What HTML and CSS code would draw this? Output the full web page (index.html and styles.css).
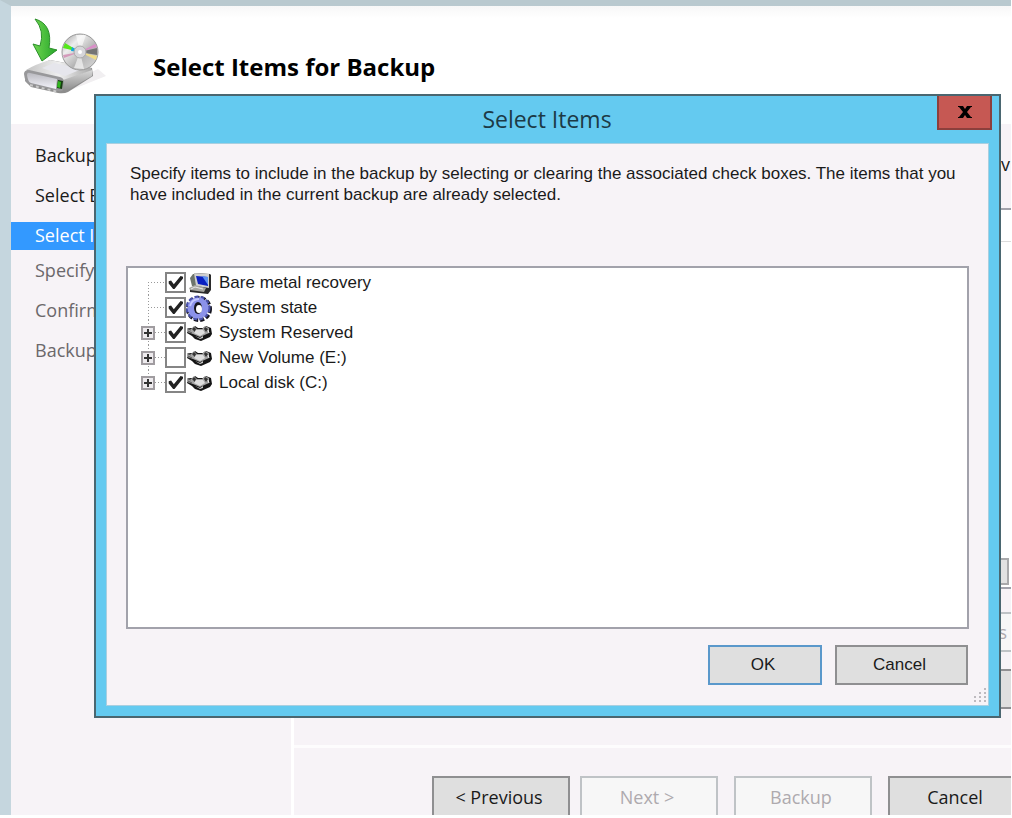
FILE: index.html
```html
<!DOCTYPE html>
<html lang="en">
<head>
  <meta charset="UTF-8">
  <title>Select Items for Backup</title>
  <link rel="stylesheet" href="styles.css">
</head>
<body>
  <!-- shared icons -->
  <svg class="sprites" aria-hidden="true">
    <symbol id="icon-disk" viewBox="0 0 26 24">
      <path d="M2 7 L7 7 L9 5 L12 7 L17 7 L20 5 L25 7 L26 13 L24 16 L15 20 L9 18 L6 15 L1 12Z" fill="#151515"/>
      <path d="M1 7 L5 8 L8 5 L11 8 L16 8 L19 5 L23 7 L23 12 L14 16 L7 13 L1 11Z" fill="#a2a2a2"/>
      <path d="M6 8 L8 6 L10 8 L9 11Z M18 8 L19 6 L22 8 L20 11Z" fill="#333"/>
      <path d="M10 9 L17 9 L19 12 L14 15 L8 12Z" fill="#dedede"/>
      <path d="M9 15 L14 17 L17 15 L17 17 L14 18Z" fill="#ccc"/>
      <path d="M2 8 L5 9 M2 10 L6 12" stroke="#555" stroke-width="1"/>
      <path d="M22 9 L23 12" stroke="#eee" stroke-width="1"/>
    </symbol>
  </svg>

  <div class="wizard">
    <header class="wizard-header">
      <svg class="wizard-logo" viewBox="0 0 86 84" aria-hidden="true">
        <defs>
          <linearGradient id="arrow" x1="0" y1="0" x2="1" y2="0">
            <stop offset="0" stop-color="#6fd650"/>
            <stop offset="1" stop-color="#25a52a"/>
          </linearGradient>
          <linearGradient id="front" x1="0" y1="0" x2="0" y2="1">
            <stop offset="0" stop-color="#b9b9bf"/>
            <stop offset="1" stop-color="#f4f4fb"/>
          </linearGradient>
          <linearGradient id="top" x1="0" y1="0" x2="1" y2="0">
            <stop offset="0" stop-color="#c4c4c4"/>
            <stop offset=".5" stop-color="#efefef"/>
            <stop offset="1" stop-color="#a9a9a9"/>
          </linearGradient>
          <linearGradient id="side" x1="0" y1="0" x2="0" y2="1">
            <stop offset="0" stop-color="#d8d8d8"/>
            <stop offset="1" stop-color="#8a8a8a"/>
          </linearGradient>
          <linearGradient id="disc" x1="0" y1="0" x2="1" y2="1">
            <stop offset="0" stop-color="#999"/>
            <stop offset=".3" stop-color="#eee"/>
            <stop offset=".6" stop-color="#b5b5b5"/>
            <stop offset="1" stop-color="#ddd"/>
          </linearGradient>
        </defs>
        <path d="M46 78 L86 62 L78 55 L50 68Z" fill="#f1eff1"/>
        <path d="M7 56 L30 46 L72 54 L73 62 L48 78 Q44 80 38 79 L11 73 L5 67Z" fill="#8d8d8d"/>
        <path d="M6 56 Q16 50 30 46 L71 54 Q73 56 70 57 L43 67Z" fill="url(#top)"/>
        <path d="M22 54 L34 49 L62 55 L45 62Z" fill="#e6e6ec"/>
        <path d="M43 66 L72 56 L72 62 L48 76 Q45 78 43 77Z" fill="url(#side)"/>
        <path d="M4 60 Q4 56 9 56 L40 63 Q44 64 44 68 L43 76 Q42 78 38 77 L9 70 Q5 69 4 60Z" fill="#98989a"/>
        <path d="M7 61 Q7 58 10 59 L37 65 L36 75 L11 69 Q8 68 7 61Z" fill="url(#front)"/>
        <path d="M10 71 L38 78" stroke="#c9c9c9" stroke-width="2" stroke-dasharray="3 3"/>
        <path d="M38 66 L43 67 L42 75 L37 74Z" fill="#173d12"/>
        <path d="M38 67 L41 68 L40 74 L37 73Z" fill="#30b51e"/>
        <circle cx="60" cy="38" r="18" fill="url(#disc)" stroke="#999" stroke-width="1"/>
        <path d="M60 38 L45 29 L43 34Z" fill="#56e81c"/>
        <path d="M60 38 L52 33 L51 37Z" fill="#12a7dd"/>
        <path d="M60 38 L77 34 L77 41Z" fill="#757575"/>
        <path d="M60 38 L75 30 L77 33Z" fill="#d98fc8"/>
        <path d="M60 38 L43 41 L44 44Z" fill="#d49abb"/>
        <path d="M60 38 L77 42 L76 46Z" fill="#f0dd88"/>
        <path d="M60 38 L56 21 L66 21Z M60 38 L54 54 L64 55Z" fill="#fff" opacity=".6"/>
        <circle cx="60" cy="38" r="6" fill="#d6d6da" stroke="#aaa"/>
        <circle cx="60" cy="38" r="2" fill="#fff"/>
        <path d="M15 5 Q33 10 29 34 L37 36 L22 47 L13 30 L20 32 Q25 17 15 5Z" fill="url(#arrow)" stroke="#2c8f2a" stroke-width="1"/>
      </svg>
      <h1>Select Items for Backup</h1>
    </header>

    <div class="wizard-body">
      <nav class="steps">
        <ul>
          <li class="done"><span>Backup Options</span></li>
          <li class="done"><span>Select Backup Configuration</span></li>
          <li class="current"><span>Select Items for Backup</span></li>
          <li><span>Specify Destination Type</span></li>
          <li><span>Confirmation</span></li>
          <li><span>Backup Progress</span></li>
        </ul>
      </nav>

      <main class="page">
        <section class="page-content">
          <p class="page-text">v</p>
          <div class="item-list">
            <div class="item-list-head"></div>
            <div class="item-list-rows"></div>
            <div class="scroll-thumb"></div>
          </div>
          <button class="btn page-btn settings" disabled>s</button>
          <button class="btn page-btn" aria-label="Add"></button>
        </section>
        <footer class="wizard-footer">
          <button class="btn previous">&lt; Previous</button>
          <button class="btn" disabled>Next &gt;</button>
          <button class="btn" disabled>Backup</button>
          <button class="btn">Cancel</button>
        </footer>
      </main>
    </div>
  </div>

  <div class="dialog" role="dialog" aria-labelledby="dialog-title">
    <div class="dialog-title">
      <h2 id="dialog-title">Select Items</h2>
      <button class="btn-close" aria-label="Close">
        <svg viewBox="0 0 16 14" aria-hidden="true">
          <path d="M1 1 H6 L8 4 L10 1 H15 V2 H14 L10 7 L14 12 H15 V13 H10 L8 10 L6 13 H1 V12 H2 L6 7 L2 2 H1Z" fill="#000"/>
        </svg>
      </button>
    </div>
    <div class="dialog-body">
      <p class="dialog-text">Specify items to include in the backup by selecting or clearing the associated check boxes. The items that you have included in the current backup are already selected.</p>

      <ul class="tree">
        <li>
          <span class="node first"></span>
          <span class="branch"></span>
          <input type="checkbox" id="bare-metal" checked>
          <svg class="icon" viewBox="0 0 26 24" aria-hidden="true">
            <path d="M8 2 L24 3 L25 4 L25 19 L22 23 L4 21 L4 18 L9 16Z" fill="#2b2b2b"/>
            <path d="M4 7 L7 3 L9 3 L11 16 L6 15Z" fill="#6d756b"/>
            <path d="M8 2 L23 3 L23 17 L10 15Z" fill="#cfcfcf"/>
            <path d="M10 5 L22 6 L22 15 L12 13Z" fill="#0a1fc0"/>
            <path d="M16 5 L22 6 L22 14Z" fill="#5b8ff0"/>
            <path d="M3 17 L9 14 L20 17 L18 21 L4 19Z" fill="#a6a6a0"/>
            <path d="M5 18 L9 16 L17 18" fill="none" stroke="#e9e9e9" stroke-width="1"/>
          </svg>
          <label for="bare-metal">Bare metal recovery</label>
        </li>
        <li>
          <span class="node"></span>
          <span class="branch"></span>
          <input type="checkbox" id="system-state" checked>
          <svg class="icon gear" viewBox="0 0 26 28" aria-hidden="true">
            <circle cx="13" cy="15" r="11" fill="none" stroke="#15151f" stroke-width="4" stroke-dasharray="4 2"/>
            <circle cx="12" cy="14" r="11" fill="none" stroke="#4a52a8" stroke-width="3" stroke-dasharray="4 2"/>
            <circle cx="12" cy="14" r="7" fill="#fff" stroke="#8b92ea" stroke-width="7"/>
            <path d="M4 12 Q6 5 13 5" fill="none" stroke="#c3c8ff" stroke-width="2"/>
            <ellipse cx="12" cy="14" rx="4" ry="6" fill="#15151f"/>
            <ellipse cx="13" cy="15" rx="3" ry="4" fill="#fff"/>
          </svg>
          <label for="system-state">System state</label>
        </li>
        <li>
          <span class="node"><button class="expand" aria-label="Expand System Reserved"></button></span>
          <span class="branch"></span>
          <input type="checkbox" id="system-reserved" checked>
          <svg class="icon" aria-hidden="true"><use href="#icon-disk"/></svg>
          <label for="system-reserved">System Reserved</label>
        </li>
        <li>
          <span class="node"><button class="expand" aria-label="Expand New Volume"></button></span>
          <span class="branch"></span>
          <input type="checkbox" id="new-volume">
          <svg class="icon" aria-hidden="true"><use href="#icon-disk"/></svg>
          <label for="new-volume">New Volume (E:)</label>
        </li>
        <li>
          <span class="node last"><button class="expand" aria-label="Expand Local disk"></button></span>
          <span class="branch"></span>
          <input type="checkbox" id="local-disk" checked>
          <svg class="icon" aria-hidden="true"><use href="#icon-disk"/></svg>
          <label for="local-disk">Local disk (C:)</label>
        </li>
      </ul>

      <div class="dialog-actions">
        <button class="btn btn-ok">OK</button>
        <button class="btn btn-cancel">Cancel</button>
      </div>
      <svg class="grip" viewBox="0 0 12 14" aria-hidden="true">
        <path d="M10 0h2v2h-2z M10 4h2v2h-2z M10 8h2v2h-2z M10 12h2v2h-2z M5 4h2v2h-2z M5 8h2v2h-2z M5 12h2v2h-2z M0 8h2v2h-2z M0 12h2v2h-2z" fill="#bdbabf"/>
      </svg>
    </div>
  </div>
</body>
</html>
```
FILE: styles.css
```css
* {
  box-sizing: border-box;
}

body {
  margin: 0;
  padding: 0 1px 3px 0;
  height: 100vh;
  overflow: hidden;
  background: #fff;
  font-family: "Open Sans", "Noto Sans", sans-serif;
  font-size: 18px;
  color: #1a1a1a;
}

h1, h2, p, ul {
  margin: 0;
  padding: 0;
}

ul {
  list-style: none;
}

.sprites {
  display: none;
}

.btn {
  height: 40px;
  padding: 0 4px 0 0;
  border: 2px solid #8f8f91;
  background: #dfdfdf;
  color: #1a1a1a;
  font: inherit;
}

.btn:disabled {
  border-color: #bfc3c6;
  background: #f7f7f7;
  color: #aeaaae;
}

/* Wizard window */
.wizard {
  display: flex;
  flex-direction: column;
  height: 100%;
  overflow: hidden;
  border-top: 6px solid #b9c9cf;
  border-left: 11px solid #c5d6de;
}

.wizard-header {
  display: flex;
  flex: none;
  align-items: flex-start;
  height: 118px;
  padding: 8px 9px;
  background: linear-gradient(#f7f7f7, #fff 12px);
}

.wizard-logo {
  width: 86px;
  height: 84px;
}

.wizard-header h1 {
  margin: 37px 0 0 47px;
  font-size: 24px;
  line-height: 32px;
  color: #000;
}

.wizard-body {
  display: flex;
  flex: 1;
  min-height: 0;
}

.steps {
  flex: none;
  width: 283px;
  padding-top: 18px;
  border-right: 3px solid #fff;
  background: #f7f3f7;
}

.steps li {
  height: 28px;
  margin-bottom: 12px;
  padding-left: 24px;
  line-height: 27px;
  color: #6b686b;
}

.steps span {
  display: block;
  width: 61px;
  white-space: nowrap;
  overflow: hidden;
}

.steps .done {
  color: #1a1a1a;
}

.steps .current {
  margin-bottom: 7px;
  background: #3399ff;
  color: #fff;
}

.page {
  display: flex;
  flex: 1;
  flex-direction: column;
  min-width: 0;
  background: #f7f3f7;
}

.page-content {
  display: flex;
  flex: 1;
  flex-direction: column;
  padding: 28px 0 0 24px;
}

.page-text {
  height: 56px;
  padding-right: 1px;
  line-height: 24px;
  text-align: right;
}

.item-list {
  display: flex;
  flex-direction: column;
  height: 381px;
  border: 2px solid #a2a2ab;
  border-right: none;
  background: #fff;
}

.item-list-head {
  height: 32px;
  border-bottom: 1px solid #dcdcdc;
}

.item-list-rows {
  flex: 1;
}

.scroll-thumb {
  height: 27px;
  margin: 0 2px 2px 0;
  border: 2px solid #a9a9ab;
  background: #e2e2e2;
}

.page-btn {
  align-self: flex-end;
  width: 140px;
  margin-top: 17px;
  border-right: none;
}

.page-btn.settings {
  margin-top: 23px;
  text-align: right;
}

.wizard-footer {
  display: flex;
  flex: none;
  gap: 16px;
  height: 70px;
  padding: 28px 0 0 138px;
  border-top: 3px solid #fdfcfd;
}

.wizard-footer .btn {
  flex: none;
  width: 138px;
  height: 42px;
}

.wizard-footer .previous {
  margin-right: -6px;
}

/* Select Items dialog */
.dialog {
  position: absolute;
  top: 94px;
  left: 94px;
  right: 11px;
  padding: 0 10px 10px;
  border: 2px solid #4a6670;
  background: #64caf0;
}

.dialog-title {
  display: flex;
  align-items: flex-start;
  height: 47px;
}

.dialog-title h2 {
  flex: 1;
  padding-left: 51px;
  font-size: 23px;
  font-weight: normal;
  line-height: 46px;
  text-align: center;
  color: #1c3a46;
}

.btn-close {
  display: flex;
  align-items: center;
  justify-content: center;
  width: 55px;
  height: 34px;
  margin-right: -3px;
  padding: 0;
  border: 2px solid #8c3f3c;
  border-top: none;
  background: #c65853;
}

.btn-close svg {
  width: 16px;
  height: 14px;
}

.dialog-body {
  position: relative;
  padding: 19px 19px 20px;
  border: 1px solid #a9cfe0;
  background: #f7f3f7;
  font-family: "Liberation Sans", Arial, sans-serif;
  font-size: 17px;
}

.dialog-text {
  min-height: 103px;
  padding: 0 4px;
  line-height: 21px;
}

.tree {
  min-height: 363px;
  padding: 2px 13px;
  border: 2px solid #a2a2ab;
  background: #fff;
}

.tree li {
  display: flex;
  align-items: center;
  height: 25px;
}

.tree input {
  flex: none;
  width: 21px;
  height: 21px;
  margin: 0;
  appearance: none;
  border: 2px solid #858585;
  background: #fff;
}

.tree input:checked::before {
  content: "";
  display: block;
  width: 17px;
  height: 17px;
  background: #222;
  clip-path: polygon(10% 42%, 24% 38%, 40% 60%, 80% 12%, 94% 16%, 94% 26%, 44% 88%, 36% 88%, 10% 56%);
}

.node {
  display: flex;
  align-items: center;
  width: 14px;
  height: 25px;
  background: repeating-linear-gradient(#999 0 1px, #fff 1px 3px) 7px 0 / 1px 100% no-repeat;
}

.node.first {
  background-position: 7px 12px;
}

.node.last {
  background-size: 1px 12px;
}

.expand {
  width: 14px;
  height: 14px;
  padding: 0;
  border: 2px solid #a09ca0;
  background:
    linear-gradient(#333, #333) center / 8px 2px no-repeat,
    linear-gradient(#333, #333) center / 2px 8px no-repeat,
    #eeebee;
}

.branch {
  width: 10px;
  height: 1px;
  background: repeating-linear-gradient(90deg, #999 0 1px, #fff 1px 3px);
}

.node:not(:has(.expand)) + .branch {
  width: 17px;
  margin-left: -7px;
}

.icon {
  flex: none;
  width: 26px;
  height: 24px;
}

.icon.gear {
  height: 28px;
}

.tree label {
  padding-left: 7px;
}

.dialog-actions {
  display: flex;
  justify-content: flex-end;
  gap: 13px;
  padding: 16px 1px 0 0;
}

.btn-ok {
  width: 114px;
  border-color: #5a98cb;
}

.btn-cancel {
  width: 133px;
}

/* resize handle in the corner */
.grip {
  position: absolute;
  right: 2px;
  bottom: 3px;
  width: 12px;
  height: 14px;
}
```
